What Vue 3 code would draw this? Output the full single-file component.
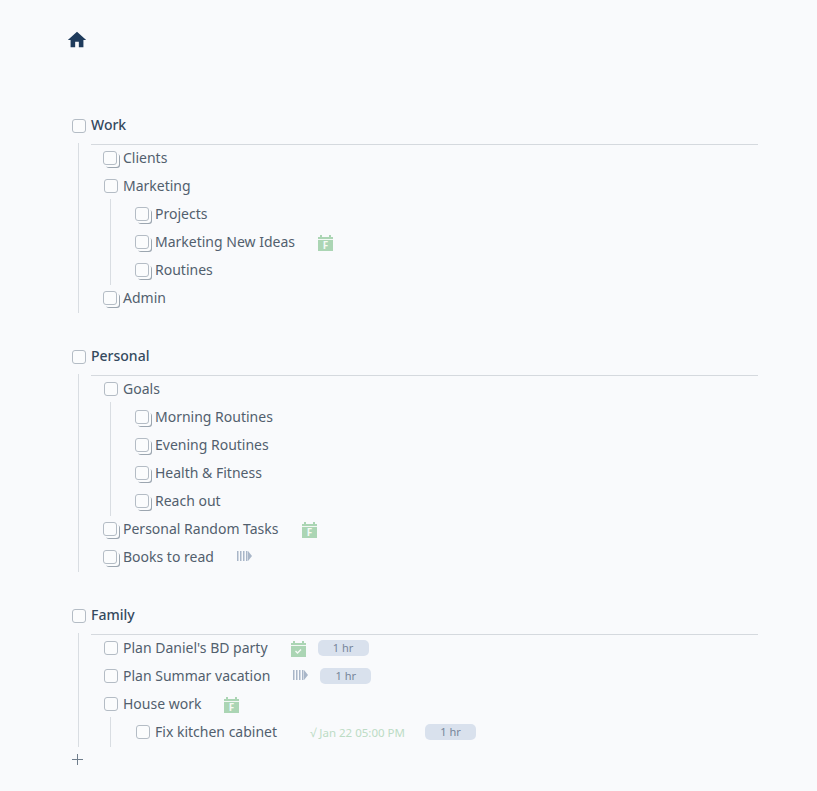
<script setup>
const sections = [
  { name: 'Work', items: [
    { name: 'Clients', stack: true },
    { name: 'Marketing', children: [
      { name: 'Projects', stack: true },
      { name: 'Marketing New Ideas', stack: true, cal: 'F' },
      { name: 'Routines', stack: true },
    ] },
    { name: 'Admin', stack: true },
  ] },
  { name: 'Personal', items: [
    { name: 'Goals', children: [
      { name: 'Morning Routines', stack: true },
      { name: 'Evening Routines', stack: true },
      { name: 'Health & Fitness', stack: true },
      { name: 'Reach out', stack: true },
    ] },
    { name: 'Personal Random Tasks', stack: true, cal: 'F' },
    { name: 'Books to read', stack: true, bars: true },
  ] },
  { name: 'Family', items: [
    { name: "Plan Daniel's BD party", cal: 'check', badge: '1 hr' },
    { name: 'Plan Summar vacation', bars: true, badge: '1 hr' },
    { name: 'House work', cal: 'F', children: [
      { name: 'Fix kitchen cabinet', date: 'Jan 22 05:00 PM', badge: '1 hr' },
    ] },
  ] },
]
</script>

<template>
  <div class="page">
    <div class="home">
      <svg width="22" height="22" viewBox="0 0 24 24"><path fill="#1f3b5c" d="M10 20v-6h4v6h5v-8h3L12 3 2 12h3v8z" /></svg>
    </div>

    <section v-for="s in sections" :key="s.name" class="section">
      <div class="head">
        <span class="box" />
        <span class="head-label">{{ s.name }}</span>
      </div>
      <div class="list">
        <template v-for="it in s.items" :key="it.name">
          <div class="row">
            <span class="box" :class="{ stack: it.stack }" />
            <span class="label">{{ it.name }}</span>
            <svg v-if="it.cal" class="cal" width="15" height="16" viewBox="0 0 15 16">
              <rect x="0" y="2" width="15" height="14" fill="#abd5b4" />
              <rect x="2" y="0" width="2" height="3" fill="#abd5b4" />
              <rect x="11" y="0" width="2" height="3" fill="#abd5b4" />
              <rect x="0" y="4" width="15" height="1" fill="#f2f8f4" />
              <text v-if="it.cal === 'F'" x="7.5" y="14" text-anchor="middle" class="cal-f">F</text>
              <path v-else d="M4.5 10l2 2 3.5-3.5" fill="none" stroke="#f5faf6" stroke-width="1.4" />
            </svg>
            <svg v-if="it.bars" class="bars" width="15" height="10" viewBox="0 0 15 10">
              <path fill="#a9b6c8" d="M0 0h1.5v10H0zM3 0h1.5v10H3zM6 0h1.5v10H6zM9 0h1.5v10H9zM11 0l4 5-4 5z" />
            </svg>
            <span v-if="it.date" class="date">√ {{ it.date }}</span>
            <span v-if="it.badge" class="badge">{{ it.badge }}</span>
          </div>
          <div v-if="it.children" class="nested">
            <div v-for="c in it.children" :key="c.name" class="row">
              <span class="box" :class="{ stack: c.stack }" />
              <span class="label">{{ c.name }}</span>
              <svg v-if="c.cal" class="cal" width="15" height="16" viewBox="0 0 15 16">
                <rect x="0" y="2" width="15" height="14" fill="#abd5b4" />
                <rect x="2" y="0" width="2" height="3" fill="#abd5b4" />
                <rect x="11" y="0" width="2" height="3" fill="#abd5b4" />
                <rect x="0" y="4" width="15" height="1" fill="#f2f8f4" />
                <text x="7.5" y="14" text-anchor="middle" class="cal-f">F</text>
              </svg>
              <span v-if="c.date" class="date">√ {{ c.date }}</span>
              <span v-if="c.badge" class="badge">{{ c.badge }}</span>
            </div>
          </div>
        </template>
      </div>
    </section>

    <div class="plus">
      <svg width="11" height="11" viewBox="0 0 11 11"><path d="M5.5 0v11M0 5.5h11" stroke="#6f7d8c" stroke-width="1" fill="none" /></svg>
    </div>
  </div>
</template>

<style>
html, body { background: #f9fafc; }
</style>

<style scoped>
.page {
  width: 817px;
  height: 791px;
  box-sizing: border-box;
  padding: 29px 59px 0 72px;
  font-family: "Noto Sans", "Open Sans", sans-serif;
  font-size: 14px;
  color: #525f6e;
  overflow: hidden;
}
.home { height: 22px; margin: 0 0 64px -6px; }
.home svg { display: block; }
.section { margin-bottom: 33px; }
.section:last-of-type { margin-bottom: 0; }
.head {
  height: 30px;
  box-sizing: border-box;
  position: relative;
  border-bottom: 1px solid #d5d9de;
  margin-left: 19px;
  line-height: 20px;
}
.head-label { font-weight: 500; color: #34495e; font-size: 14px; }
.list {
  margin-top: -2px;
  margin-left: 6px;
  border-left: 1px solid #d9dde2;
  padding-left: 25px;
  padding-bottom: 2px;
}
.row { height: 28px; display: flex; align-items: center; }
.nested {
  margin-left: 6px;
  margin-bottom: -2px;
  border-left: 1px solid #d9dde2;
  padding-left: 25px;
  padding-bottom: 2px;
}
.box {
  width: 14px;
  height: 14px;
  margin-top: 1px;
  box-sizing: border-box;
  border: 1px solid #b4bcc5;
  border-radius: 3px;
  background: #fbfcfd;
  flex: none;
}
.head .box { position: absolute; left: -19px; top: 4px; margin-top: 0; }
.box.stack {
  box-shadow: 2px 2px 0 #fbfcfd, 3px 3px 0 #9ca6b0;
  margin-left: -1px;
  margin-right: 1px;
}
.label { margin-left: 5px; white-space: nowrap; }
.cal { margin-left: 23px; margin-top: 3px; flex: none; }
.cal-f { font: 700 10px "Noto Sans", sans-serif; fill: #f5faf6; }
.bars { margin-left: 23px; flex: none; }
.date {
  margin-left: 33px;
  margin-top: 2px;
  font-size: 11.5px;
  color: #bcdcc5;
  white-space: nowrap;
  width: 115px;
}
.badge {
  width: 51px;
  height: 16px;
  margin-top: 2px;
  border-radius: 5px;
  background: #d9e1ed;
  color: #77859a;
  font-size: 11px;
  line-height: 16px;
  text-align: center;
  margin-left: 12px;
}
.date + .badge { margin-left: 0; }
.plus { margin-top: 7px; height: 11px; }
.plus svg { display: block; }
</style>
